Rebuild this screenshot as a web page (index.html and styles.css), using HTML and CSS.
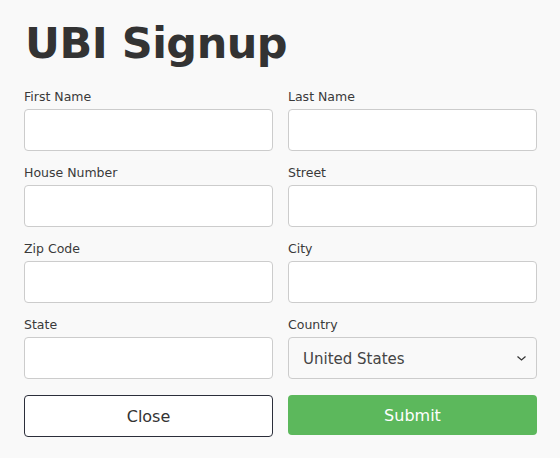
FILE: index.html
```html
<!DOCTYPE html>
<html lang="en">
<head>
    <meta charset="UTF-8">
    <title>UBI Signup</title>
    <link rel="stylesheet" href="styles.css">
</head>
<body>
    <h1>UBI Signup</h1>
    <form class="signup">
        <div class="field">
            <label>First Name</label>
            <input type="text" name="first_name">
        </div>
        <div class="field">
            <label>Last Name</label>
            <input type="text" name="last_name">
        </div>
        <div class="field">
            <label>House Number</label>
            <input type="text" name="house_number">
        </div>
        <div class="field">
            <label>Street</label>
            <input type="text" name="street">
        </div>
        <div class="field">
            <label>Zip Code</label>
            <input type="text" name="zip">
        </div>
        <div class="field">
            <label>City</label>
            <input type="text" name="city">
        </div>
        <div class="field">
            <label>State</label>
            <input type="text" name="state">
        </div>
        <div class="field">
            <label>Country</label>
            <div class="select-wrap">
                <select name="country">
                    <option>United States</option>
                </select>
                <svg class="chevron" width="9" height="5" viewBox="0 0 9 5"><path d="M0.5 0.5 L4.5 4 L8.5 0.5" fill="none" stroke="#333" stroke-width="1.2"/></svg>
            </div>
        </div>
        <button type="button" class="btn-close">Close</button>
        <button type="submit" class="btn-submit">Submit</button>
    </form>
</body>
</html>
```

FILE: styles.css
```css
body {
    margin: 0;
    padding: 0 23px 0 24px;
    background-color: #f9f9f9;
    font-family: "DejaVu Sans", sans-serif;
    color: #333;
}
h1 {
    margin: 0;
    padding: 16px 0 0 1px;
    font-size: 43px;
    line-height: 54px;
    font-weight: bold;
    letter-spacing: -0.5px;
    color: #333;
}
.signup {
    display: grid;
    grid-template-columns: 249px 249px;
    column-gap: 15px;
    row-gap: 13px;
    margin-top: 18px;
}
.field label {
    display: block;
    font-size: 12.5px;
    line-height: 17px;
    margin-bottom: 4px;
    color: #3a3a3a;
}
.field input, .field select {
    box-sizing: border-box;
    width: 100%;
    height: 42px;
    border: 1px solid #ccc;
    border-radius: 4px;
    background-color: #fff;
    font-family: inherit;
}
.select-wrap {
    position: relative;
}
.field select {
    appearance: none;
    padding: 2px 14px 0;
    font-size: 15px;
    color: #444;
    background-color: #f9f9f9;
}
.chevron {
    position: absolute;
    right: 11px;
    top: 19px;
}
.btn-close, .btn-submit {
    box-sizing: border-box;
    margin-top: 3px;
    height: 42px;
    border-radius: 4px;
    font-family: inherit;
    font-size: 16px;
    font-weight: normal;
    cursor: pointer;
}
.btn-close {
    background-color: #fff;
    border: 1px solid #2b2e3a;
    color: #333;
}
.btn-submit {
    height: 40px;
    background-color: #5cb85c;
    border: none;
    color: #fff;
}
```
